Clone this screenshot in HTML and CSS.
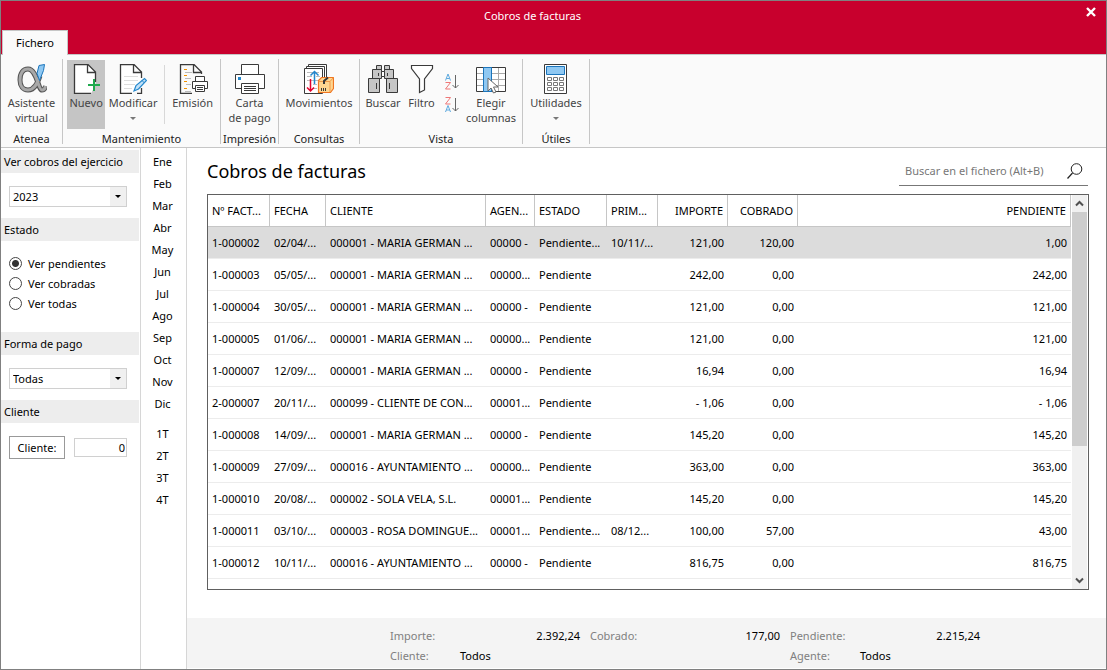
FILE: index.html
```html
<!DOCTYPE html>
<html lang="es">
<head>
<meta charset="utf-8">
<title>Cobros de facturas</title>
<link rel="stylesheet" href="styles.css">
</head>
<body>
<div class="window">
  <header class="titlebar">
    <div class="title-row">
      <span class="title">Cobros de facturas</span>
      <button class="close" aria-label="Cerrar"><svg width="10" height="10" viewBox="0 0 10 10"><path d="M1 1l8 8M9 1L1 9" stroke="#fff" stroke-width="2.4"/></svg></button>
    </div>
    <nav class="tabs"><button class="tab">Fichero</button></nav>
  </header>

  <div class="ribbon">
    <section class="group g-atenea">
      <div class="tools">
        <button class="tool">
          <svg width="30" height="30" viewBox="0 0 30 30" fill="none"><path d="M23 12c-2 6-5 14-12 14-5 0-8-4-8-10 0-7 3-11 8-11 9 0 10 21 14 21 2 0 3-1 3.500-4" stroke="#555" stroke-width="5"/><path d="M23 12c-2 6-5 14-12 14-5 0-8-4-8-10 0-7 3-11 8-11 9 0 10 21 14 21 2 0 3-1 3.500-4" stroke="#a8a8a8" stroke-width="3"/><path d="M22 1.500l5.500-1-1 6-4 10-2.500-7z" fill="#8fc8f2" stroke="#1b75bc"/></svg>
          <span>Asistente<br>virtual</span>
        </button>
      </div>
      <h2>Atenea</h2>
    </section>
    <section class="group g-mant">
      <div class="tools">
        <button class="tool active">
          <svg width="28" height="30" viewBox="0 0 28 30" fill="none"><path d="M19 29.500H2.500V.5H16L23.500 8v13" fill="#fff"/><path d="M19 29.500H2.500V.5H16L23.500 8v10M15.500 1v7.500h8" stroke="#3a3a3a" stroke-width="1.300"/><path d="M22 15v12M16 21h12" stroke="#1fa94d" stroke-width="2"/></svg>
          <span>Nuevo</span>
        </button>
        <button class="tool w-mod">
          <svg width="28" height="30" viewBox="0 0 28 30" fill="none"><path d="M13 29.500H1.500V.5H15L22.500 8v6M14.500 1v7.500h8M22.500 24v5.500H18" fill="#fff" stroke="#3a3a3a" stroke-width="1.300"/><path d="M5 12.500h14M5 16.500h14M5 20.500h11M5 24.500h8" stroke="#ddd"/><path d="M15 27l2-5.500 8.500-7 2 2-8 8.500z" fill="#c3e2f8" stroke="#2387cc" stroke-width="1.200"/><path d="M23 16.500l2.500 2.500" stroke="#2387cc"/></svg>
          <span>Modificar</span><i class="arrow"></i>
        </button>
        <span class="divider"></span>
        <button class="tool w-emi">
          <svg width="30" height="30" viewBox="0 0 30 30" fill="none"><path d="M14 29.500H2.500V.5H16L23.500 8v2M15.500 1v7.500h8" stroke="#3a3a3a" stroke-width="1.300"/><path d="M6 5.500h3M6 11.500h3M6 17.500h3M6 24.500h3" stroke="#f39200" stroke-width="1.200"/><path d="M7 8.500h7M7 14.500h6M8 20.500h5M7 27.500h6" stroke="#bbb"/><path d="M17.500 17.500v-5h9v5M17.500 24.500h-3v-7h15v7h-3M17.500 21.500h9v6h-9zM19 23.500h6M19 25.500h6" fill="#fff" stroke="#3a3a3a"/></svg>
          <span>Emisión</span>
        </button>
      </div>
      <h2>Mantenimiento</h2>
    </section>
    <section class="group g-imp">
      <div class="tools">
        <button class="tool">
          <svg width="30" height="30" viewBox="0 0 30 30" fill="#fff" stroke="#3a3a3a"><path d="M6.500 10.500V.5h17v10M6.500 24.500h-6v-14h29v14h-6"/><path d="M6.500 19.500h17v10h-17zM9 22.500h12M9 24.500h12M9 26.500h12"/><path d="M3 13h3v3H3z" fill="#2387cc" stroke="none"/></svg>
          <span>Carta<br>de pago</span>
        </button>
      </div>
      <h2>Impresión</h2>
    </section>
    <section class="group g-cons">
      <div class="tools">
        <button class="tool">
          <svg width="30" height="30" viewBox="0 0 30 30" fill="#fff" stroke="#3a3a3a"><path d="M4.500.500h18v20h-18z"/><path d="M2.500 2.500h18v20h-18z"/><path d="M.5 4.500h18v25H.5z"/><path d="M3 8.500h12M3 12.500h5M12 12.500h4M3 16.500h12M9 20.500h4M9 24.500h4" stroke="#bbb"/><path d="M10.500 20V8M6.500 11.500l4-4 4 4" fill="none" stroke="#2387cc" stroke-width="1.500"/><path d="M6.500 15v12M3 23.500l3.500 3.500 3.500-3.500" fill="none" stroke="#e4002b" stroke-width="1.500"/><path d="M14.500 16.500l3-3h12v11l-3 4h-12z" fill="#ffd690" stroke="#ef7622" stroke-width="1.200"/><path d="M14.500 17.500h11.500v10.500M26 17.500l3.500-4" fill="none" stroke="#ef9a4a"/><path d="M20 20v-3l4-3.500" fill="none" stroke-width="2"/><path d="M17.500 24v3M19.500 24v3M21.500 24v3"/></svg>
          <span>Movimientos</span>
        </button>
      </div>
      <h2>Consultas</h2>
    </section>
    <section class="group g-vista">
      <div class="tools">
        <button class="tool w-bus">
          <svg width="30" height="30" viewBox="0 0 30 30" fill="#c6c6c6" stroke="#3a3a3a"><path d="M8.500 1.500h5v5h-5zM16.500 1.500h5v5h-5z"/><path d="M4.500 5.500h9v9h-9zM16.500 5.500h9v9h-9z"/><path d="M13.500 7.500h3v5h-3z" fill="#fff"/><path d="M.5 14.500h11v14H.5zM18.500 14.500h11v14h-11z"/><path d="M8.500 19v6M21.500 19v6M10.500 9v3M19.500 9v3"/></svg>
          <span>Buscar</span>
        </button>
        <button class="tool w-fil">
          <svg width="24" height="30" viewBox="0 0 24 30"><path d="M1.500 1.500h21v3l-8 10.500v11l-5 2.500V15l-8-10.500z" fill="#fff" stroke="#3a3a3a" stroke-width="1.200"/></svg>
          <span>Filtro</span>
        </button>
        <div class="sorts">
          <button aria-label="Orden ascendente"><svg width="16" height="18" viewBox="0 0 16 18" fill="none"><path d="M1.500 7.500L4 1l2.500 6.500M2.300 5.500h3.400" stroke="#5eaadf"/><path d="M1.500 9.500h5l-5 6.500h5" stroke="#ee7777"/><path d="M11.500 2v13M8.500 12l3 3 3-3" stroke="#666"/></svg></button>
          <button aria-label="Orden descendente"><svg width="16" height="18" viewBox="0 0 16 18" fill="none"><path d="M1.500 1.500h5l-5 6.500h5" stroke="#ee7777"/><path d="M1.500 16L4 9.500 6.500 16M2.300 14h3.400" stroke="#5eaadf"/><path d="M11.500 2v13M8.500 12l3 3 3-3" stroke="#666"/></svg></button>
        </div>
        <button class="tool w-ele">
          <svg width="30" height="30" viewBox="0 0 30 30" fill="#fff"><path d="M.5 3.500h29v24H.5z" stroke="#3a3a3a"/><path d="M1 9.500h28M1 15.500h28M1 21.500h28M22.500 4v23" stroke="#aaa"/><path d="M7.500 3.500h8v24h-8z" fill="#8fc8f2" stroke="#1b75bc"/><path d="M12 14v13l3-3 2.500 5 2.500-1-2.500-5h4.500z" stroke="#666"/></svg>
          <span>Elegir<br>columnas</span>
        </button>
      </div>
      <h2>Vista</h2>
    </section>
    <section class="group g-util">
      <div class="tools">
        <button class="tool">
          <svg width="24" height="30" viewBox="0 0 24 30" fill="#fff"><path d="M.5.500h22v29H.5z" stroke="#3a3a3a"/><path d="M2.500 2.500h18v8h-18z" fill="#8fc8f2" stroke="#1b75bc"/><path d="M3.500 13.500h4v3h-4zM9.500 13.500h4v3h-4zM15.500 13.500h4v3h-4zM3.500 18.500h4v3h-4zM9.500 18.500h4v3h-4zM15.500 18.500h4v3h-4zM3.500 23.500h4v3h-4zM9.500 23.500h4v3h-4zM15.500 23.500h4v3h-4z" stroke="#777"/></svg>
          <span>Utilidades</span><i class="arrow"></i>
        </button>
      </div>
      <h2>Útiles</h2>
    </section>
  </div>

  <div class="workspace">
    <aside class="filters">
      <h3><label for="year">Ver cobros del ejercicio</label></h3>
      <div class="pick"><select id="year"><option>2023</option></select></div>
      <h3>Estado</h3>
      <div class="radios">
        <label><input type="radio" name="estado" checked>Ver pendientes</label>
        <label><input type="radio" name="estado">Ver cobradas</label>
        <label><input type="radio" name="estado">Ver todas</label>
      </div>
      <h3><label for="pay">Forma de pago</label></h3>
      <div class="pick"><select id="pay"><option>Todas</option></select></div>
      <h3>Cliente</h3>
      <div class="client"><button>Cliente:</button><input type="text" value="0" aria-label="Cliente"></div>
    </aside>

    <nav class="periods">
      <button>Ene</button><button>Feb</button><button>Mar</button><button>Abr</button><button>May</button><button>Jun</button><button>Jul</button><button>Ago</button><button>Sep</button><button>Oct</button><button>Nov</button><button>Dic</button>
      <button class="quarter">1T</button><button>2T</button><button>3T</button><button>4T</button>
    </nav>

    <main class="main">
      <div class="heading">
        <h1>Cobros de facturas</h1>
        <div class="search">
          <input type="text" placeholder="Buscar en el fichero (Alt+B)" aria-label="Buscar en el fichero">
          <button aria-label="Buscar"><svg width="16" height="16" viewBox="0 0 16 16" fill="none" stroke="#222"><circle cx="9.500" cy="6" r="5.300"/><path d="M5.500 10L.5 15.500" stroke-width="1.200"/></svg></button>
        </div>
      </div>
      <div class="grid">
        <div class="rows">
          <table>
            <colgroup><col class="c62"><col class="c56"><col class="c160"><col class="c49"><col class="c72"><col class="c51"><col class="c70"><col class="c70"><col></colgroup>
            <thead><tr><th>Nº FACT...</th><th>FECHA</th><th>CLIENTE</th><th>AGEN...</th><th>ESTADO</th><th>PRIM...</th><th class="num">IMPORTE</th><th class="num">COBRADO</th><th class="num">PENDIENTE</th></tr></thead>
            <tbody>
              <tr class="selected"><td>1-000002</td><td>02/04/...</td><td>000001 - MARIA GERMAN ...</td><td>00000 -</td><td>Pendiente...</td><td>10/11/...</td><td class="num">121,00</td><td class="num">120,00</td><td class="num">1,00</td></tr>
              <tr><td>1-000003</td><td>05/05/...</td><td>000001 - MARIA GERMAN ...</td><td>00000...</td><td>Pendiente</td><td></td><td class="num">242,00</td><td class="num">0,00</td><td class="num">242,00</td></tr>
              <tr><td>1-000004</td><td>30/05/...</td><td>000001 - MARIA GERMAN ...</td><td>00000 -</td><td>Pendiente</td><td></td><td class="num">121,00</td><td class="num">0,00</td><td class="num">121,00</td></tr>
              <tr><td>1-000005</td><td>01/06/...</td><td>000001 - MARIA GERMAN ...</td><td>00000...</td><td>Pendiente</td><td></td><td class="num">121,00</td><td class="num">0,00</td><td class="num">121,00</td></tr>
              <tr><td>1-000007</td><td>12/09/...</td><td>000001 - MARIA GERMAN ...</td><td>00000 -</td><td>Pendiente</td><td></td><td class="num">16,94</td><td class="num">0,00</td><td class="num">16,94</td></tr>
              <tr><td>2-000007</td><td>20/11/...</td><td>000099 - CLIENTE DE CON...</td><td>00001...</td><td>Pendiente</td><td></td><td class="num">- 1,06</td><td class="num">0,00</td><td class="num">- 1,06</td></tr>
              <tr><td>1-000008</td><td>14/09/...</td><td>000001 - MARIA GERMAN ...</td><td>00000 -</td><td>Pendiente</td><td></td><td class="num">145,20</td><td class="num">0,00</td><td class="num">145,20</td></tr>
              <tr><td>1-000009</td><td>27/09/...</td><td>000016 - AYUNTAMIENTO ...</td><td>00000...</td><td>Pendiente</td><td></td><td class="num">363,00</td><td class="num">0,00</td><td class="num">363,00</td></tr>
              <tr><td>1-000010</td><td>20/08/...</td><td>000002 - SOLA VELA, S.L.</td><td>00001...</td><td>Pendiente</td><td></td><td class="num">145,20</td><td class="num">0,00</td><td class="num">145,20</td></tr>
              <tr><td>1-000011</td><td>03/10/...</td><td>000003 - ROSA DOMINGUE...</td><td>00001...</td><td>Pendiente...</td><td>08/12...</td><td class="num">100,00</td><td class="num">57,00</td><td class="num">43,00</td></tr>
              <tr><td>1-000012</td><td>10/11/...</td><td>000016 - AYUNTAMIENTO ...</td><td>00000 -</td><td>Pendiente</td><td></td><td class="num">816,75</td><td class="num">0,00</td><td class="num">816,75</td></tr>
            </tbody>
          </table>
        </div>
        <div class="scrollbar">
          <button aria-label="Subir"><svg width="9" height="7" viewBox="0 0 9 7"><path d="M1 5.500L4.500 2 8 5.500" fill="none" stroke="#505050" stroke-width="2"/></svg></button>
          <div class="track"><div class="thumb"></div></div>
          <button aria-label="Bajar"><svg width="9" height="7" viewBox="0 0 9 7"><path d="M1 1.500L4.500 5 8 1.500" fill="none" stroke="#505050" stroke-width="2"/></svg></button>
        </div>
      </div>
      <footer class="totals">
        <dl>
          <div class="sum"><dt>Importe:</dt><dd>2.392,24</dd></div>
          <div class="sum"><dt>Cobrado:</dt><dd>177,00</dd></div>
          <div class="sum"><dt>Pendiente:</dt><dd>2.215,24</dd></div>
          <div class="who"><dt>Cliente:</dt><dd>Todos</dd></div>
          <div class="who agent"><dt>Agente:</dt><dd>Todos</dd></div>
        </dl>
      </footer>
    </main>
  </div>
</div>
</body>
</html>
```
FILE: styles.css
```css
* { box-sizing: border-box; }
body { margin: 0; font-family: "Noto Sans", "Open Sans", sans-serif; font-size: 11px; line-height: 15px; color: #000; background: #fff; }
h1, h2, h3, dl, dd { margin: 0; font-weight: 400; }
button, input, select { font: inherit; color: inherit; }
button { padding: 0; border: 0; background: none; }
svg { display: block; flex: none; }

.window { display: flex; flex-direction: column; min-height: 100vh; border: 1px solid #808080; }

.titlebar { background: #c8002d; color: #fff; }
.title-row { display: flex; align-items: center; height: 29px; }
.title { flex: 1; text-align: center; }
.close { display: flex; align-items: center; justify-content: center; width: 42px; height: 22px; align-self: flex-start; padding-left: 12px; }
.tabs { display: flex; padding-left: 1px; }
.tab { position: relative; width: 66px; height: 25px; margin-bottom: -1px; padding-bottom: 1px; background: #fafafa; color: #000; border: 1px solid #c6c6c6; border-bottom: 0; }

.ribbon { display: flex; height: 94px; padding-top: 4px; background: #fafafa; border-top: 1px solid #c6c6c6; border-bottom: 1px solid #c6c6c6; }
.group { display: flex; flex-direction: column; height: 85px; border-right: 1px solid #c6c6c6; }
.group h2 { font-size: 11px; line-height: 15px; text-align: center; color: #222; white-space: nowrap; }
.tools { display: flex; justify-content: center; height: 72px; padding-top: 1px; margin-bottom: 2px; }
.tool { display: flex; flex-direction: column; align-items: center; gap: 1px; height: 69px; padding-top: 4px; color: #444; white-space: nowrap; }
.tool.active { width: 39px; background: #c5c5c5; }
.arrow { margin-top: 6px; border: 3px solid transparent; border-top-color: #777; border-bottom: 0; }
.g-atenea { width: 62px; }
.g-mant { width: 158px; }
.g-mant .tools { justify-content: flex-start; padding-left: 4px; }
.g-imp { width: 58px; }
.g-cons { width: 81px; }
.g-vista { width: 163px; }
.g-util { width: 67px; }
.w-mod { width: 57px; }
.w-emi { width: 56px; }
.divider { width: 1px; height: 59px; margin: 5px 0 0 3px; background: #d8d8d8; }
.g-vista .tools { justify-content: flex-start; padding-left: 4px; }
.w-bus { width: 38px; }
.w-fil { width: 39px; }
.w-ele { width: 60px; }
.sorts { display: flex; flex-direction: column; gap: 5px; padding-top: 13px; margin-left: 3px; width: 17px; }

.workspace { display: flex; flex: 1; }
.filters { flex: none; width: 140px; padding-top: 2px; border-right: 1px solid #d6d6d6; }
.filters h3 { width: 138px; height: 23px; padding-left: 3px; font-size: 11px; line-height: 23px; background: #ededed; white-space: nowrap; }
.pick { position: relative; width: 118px; margin: 13px 0 11px 8px; }
.pick select { display: block; width: 100%; height: 21px; padding: 0 3px; appearance: none; border: 1px solid #d0d0d0; border-radius: 0; background: linear-gradient(#f0f0f0, #f0f0f0) right / 16px 100% no-repeat #fff; }
.pick::after { content: ""; position: absolute; right: 6px; top: 9px; border: 3px solid transparent; border-top-color: #000; border-bottom: 0; pointer-events: none; }
.radios { display: flex; flex-direction: column; padding: 12px 0 19px 8px; }
.radios label { display: flex; align-items: center; gap: 6px; height: 20px; }
.radios input { appearance: none; width: 13px; height: 13px; margin: 0; border: 1px solid #444; border-radius: 50%; }
.radios input:checked { background: radial-gradient(circle, #333 3px, #fff 4px); }
.client { display: flex; align-items: center; gap: 9px; padding: 13px 0 0 8px; }
.client button { width: 56px; height: 23px; border: 1px solid #999; background: #fff; }
.client input { width: 53px; height: 19px; padding: 0 1px; text-align: right; border: 1px solid #d0d0d0; }

.periods { flex: none; display: flex; flex-direction: column; width: 46px; padding: 2px 2px 0 0; border-right: 1px solid #d6d6d6; }
.periods button { height: 22px; }
.periods .quarter { margin-top: 8px; }

.main { flex: 1; min-width: 0; display: flex; flex-direction: column; }
.heading { display: flex; justify-content: space-between; align-items: flex-start; height: 46px; padding: 8px 18px 0 20px; }
h1 { font-size: 18px; line-height: 30px; }
.search { display: flex; align-items: center; width: 189px; height: 30px; padding: 0 5px 0 6px; border-bottom: 1px solid #777; }
.search input { flex: 1; min-width: 0; padding: 0; border: 0; outline: 0; }
.search input::placeholder { color: #777; opacity: 1; }

.grid { display: flex; flex: 1; margin: 0 17px 0 20px; border: 1px solid #606060; }
.rows { flex: 1; min-width: 0; border-right: 1px solid #fff; }
table { width: 100%; table-layout: fixed; border-collapse: separate; border-spacing: 0; }
th, td { height: 32px; padding: 0 4px; text-align: left; font-weight: 400; white-space: nowrap; }
th { border-right: 1px solid #c6c6c6; border-bottom: 1px solid #c6c6c6; }
td { border-bottom: 1px solid #ececec; }
th.num, td.num { text-align: right; }
.selected td { background: #dcdcdc; }
.c62 { width: 62px; }
.c56 { width: 56px; }
.c160 { width: 160px; }
.c49 { width: 49px; }
.c72 { width: 72px; }
.c51 { width: 51px; }
.c70 { width: 70px; }
.scrollbar { display: flex; flex-direction: column; width: 16px; border-right: 1px solid #fff; background: #f0f0f0; }
.scrollbar button { display: flex; align-items: center; justify-content: center; height: 17px; }
.track { flex: 1; }
.thumb { height: 65%; background: #cdcdcd; }

.totals { margin-top: 28px; margin-bottom: 1px; padding: 8px 20px 2px 203px; background: #f4f4f4; }
.totals dl { display: grid; grid-template-columns: repeat(3, 190px); column-gap: 10px; line-height: 20px; }
.totals dl > div { display: flex; }
.totals dt { width: 70px; color: #808080; }
.sum dd { flex: 1; text-align: right; }
.agent { grid-column: 3; }
```
